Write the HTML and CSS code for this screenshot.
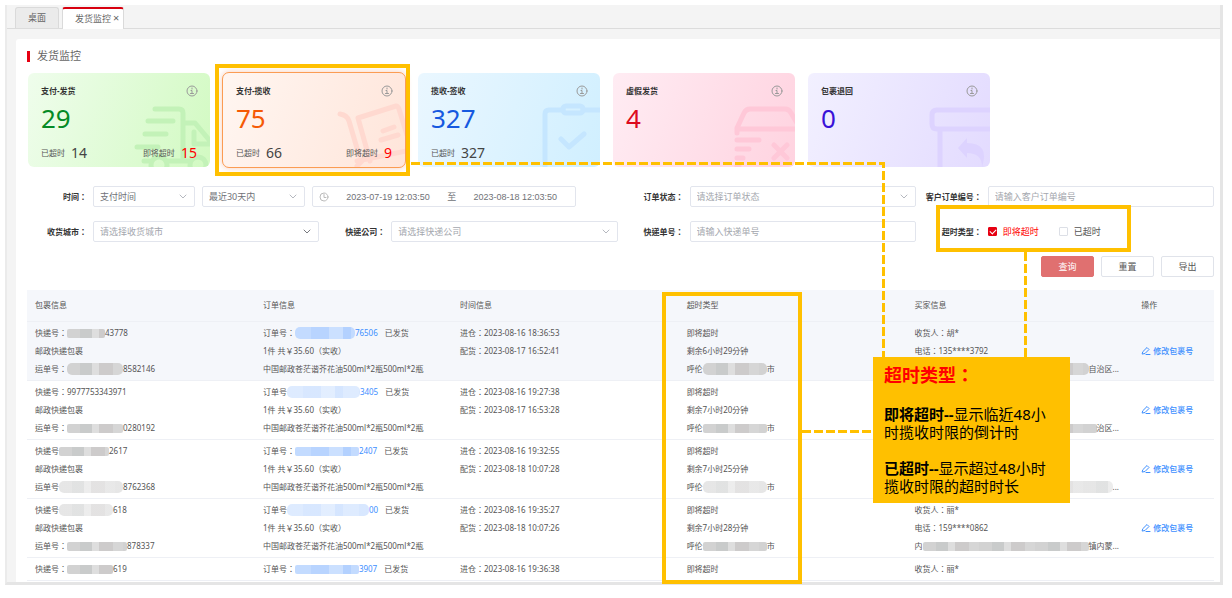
FILE: index.html
```html
<!DOCTYPE html>
<html lang="zh-CN">
<head>
<meta charset="utf-8">
<title>发货监控</title>
<link rel="stylesheet" href="styles.css">
</head>
<body>
<div class="frame">
  <nav class="tabs">
    <button class="tab" type="button">桌面</button>
    <button class="tab tab-active" type="button">发货监控<span class="tab-close">×</span></button>
  </nav>
  <main class="panel">
    <h1 class="page-title">发货监控</h1>

    <section class="cards">
      <article class="card card-green">
        <svg class="art" viewBox="0 0 182 94"><path d="M127 36H151Q155 36 155 40V88M120 48H145M117 61H138M109 74H130M116 88H122M138 88H162M155 50H167L182 68M166 59V71H182"/><circle cx="131" cy="92" r="8"/><circle cx="170" cy="92" r="8"/></svg>
        <header class="card-head"><h2>支付-发货</h2><svg class="info" viewBox="0 0 12 12"><circle cx="6" cy="6" r="5"/><path d="M6 3v1M5 5.500h1v3M4.500 8.500h3"/></svg></header>
        <strong class="card-num">29</strong>
        <footer class="card-foot"><span>已超时 <b>14</b></span><span>即将超时 <b class="hot">15</b></span></footer>
      </article>
      <article class="card card-orange">
        <svg class="art" viewBox="0 0 182 94"><path d="M117 41Q124 42 126 48L136 82M135 45L173 33Q175 33 176 36L184 62M135 45L147 88M160 58L171 54M158 67L175 62M134 88L183 78M134 93L140 87"/></svg>
        <header class="card-head"><h2>支付-揽收</h2><svg class="info" viewBox="0 0 12 12"><circle cx="6" cy="6" r="5"/><path d="M6 3v1M5 5.500h1v3M4.500 8.500h3"/></svg></header>
        <strong class="card-num">75</strong>
        <footer class="card-foot"><span>已超时 <b>66</b></span><span>即将超时 <b class="hot">9</b></span></footer>
      </article>
      <article class="card card-blue">
        <svg class="art" viewBox="0 0 182 94"><path d="M127 96V41Q127 37 131 37H145M165 37H184M143 66L151 74L166 61"/><rect x="145" y="33" width="20" height="7" rx="3"/></svg>
        <header class="card-head"><h2>揽收-签收</h2><svg class="info" viewBox="0 0 12 12"><circle cx="6" cy="6" r="5"/><path d="M6 3v1M5 5.500h1v3M4.500 8.500h3"/></svg></header>
        <strong class="card-num">327</strong>
        <footer class="card-foot"><span>已超时 <b>327</b></span></footer>
      </article>
      <article class="card card-pink">
        <svg class="art" viewBox="0 0 182 94"><path d="M124 60V55L131 40Q133 36 137 36H172Q176 36 178 40L184 50M124 56H184M124 67H146M124 76H136M124 85H130M124 93H126M161 72L174 85M174 72L161 85"/></svg>
        <header class="card-head"><h2>虚假发货</h2><svg class="info" viewBox="0 0 12 12"><circle cx="6" cy="6" r="5"/><path d="M6 3v1M5 5.500h1v3M4.500 8.500h3"/></svg></header>
        <strong class="card-num">4</strong>
      </article>
      <article class="card card-purple">
        <svg class="art" viewBox="0 0 182 94"><path d="M184 37H129Q124 37 124 42V51Q124 56 129 56H184M132 56V96"/><path class="solid" d="M150 75L159 65V70Q182 70 174 94Q174 80 159 80V85Z"/></svg>
        <header class="card-head"><h2>包裹退回</h2><svg class="info" viewBox="0 0 12 12"><circle cx="6" cy="6" r="5"/><path d="M6 3v1M5 5.500h1v3M4.500 8.500h3"/></svg></header>
        <strong class="card-num">0</strong>
      </article>
    </section>

    <form class="filters">
      <div class="field field-wide">
        <label class="label" for="time-kind">时间：</label>
        <div class="controls">
          <div class="select"><select id="time-kind"><option>支付时间</option></select><svg class="chevron" viewBox="0 0 8 6"><path d="M1 1L4 4L7 1"/></svg></div>
          <div class="select"><select aria-label="时间范围"><option>最近30天内</option></select><svg class="chevron" viewBox="0 0 8 6"><path d="M1 1L4 4L7 1"/></svg></div>
          <div class="range">
            <svg class="clock" viewBox="0 0 10 10"><circle cx="5" cy="5" r="4"/><path d="M5 2.500V5.500H7"/></svg>
            <input type="text" aria-label="开始时间" value="2023-07-19 12:03:50"><span>至</span><input type="text" aria-label="结束时间" value="2023-08-18 12:03:50">
          </div>
        </div>
      </div>
      <div class="field">
        <label class="label" for="status">订单状态：</label>
        <div class="select"><select id="status" class="empty"><option>请选择订单状态</option></select><svg class="chevron" viewBox="0 0 8 6"><path d="M1 1L4 4L7 1"/></svg></div>
      </div>
      <div class="field">
        <label class="label" for="client-no">客户订单编号：</label>
        <input class="text" id="client-no" type="text" placeholder="请输入客户订单编号">
      </div>
      <div class="field">
        <label class="label" for="city">收货城市：</label>
        <div class="select"><select id="city" class="empty"><option>请选择收货城市</option></select><svg class="chevron chevron-dark" viewBox="0 0 8 6"><path d="M1 1L4 4L7 1"/></svg></div>
      </div>
      <div class="field">
        <label class="label" for="company">快递公司：</label>
        <div class="select"><select id="company" class="empty"><option>请选择快递公司</option></select><svg class="chevron" viewBox="0 0 8 6"><path d="M1 1L4 4L7 1"/></svg></div>
      </div>
      <div class="field">
        <label class="label" for="express-no">快递单号：</label>
        <input class="text" id="express-no" type="text" placeholder="请输入快递单号">
      </div>
      <div class="field">
        <span class="label">超时类型：</span>
        <div class="checks">
          <label class="check check-on"><input type="checkbox" checked>即将超时</label>
          <label class="check"><input type="checkbox">已超时</label>
        </div>
      </div>
    </form>
    <div class="actions">
      <button class="btn btn-primary" type="button">查询</button>
      <button class="btn" type="button">重置</button>
      <button class="btn" type="button">导出</button>
    </div>

    <table class="grid">
      <colgroup><col class="c1"><col class="c2"><col class="c3"><col class="c4"><col class="c5"><col></colgroup>
      <thead><tr><th>包裹信息</th><th>订单信息</th><th>时间信息</th><th>超时类型</th><th>买家信息</th><th>操作</th></tr></thead>
      <tbody>
        <tr class="row-hover">
          <td><p>快递号：<i class="mask w38"></i>43778</p><p>邮政快递包裹</p><p>运单号：<i class="mask tall w56"></i>8582146</p></td>
          <td><p>订单号：<i class="mask blue tall w60"></i><a href="#">76506</a>已发货</p><p>1件 共￥35.60（实收）</p><p>中国邮政苍茫谐芥花油500ml*2瓶500ml*2瓶</p></td>
          <td><p>进仓：2023-08-16 18:36:53</p><p>配货：2023-08-17 16:52:41</p></td>
          <td><p>即将超时</p><p>剩余6小时29分钟</p><p>呼伦<i class="mask tall w64"></i>市</p></td>
          <td><p>收货人：胡*</p><p>电话：135****3792</p><p><i class="mask tall w174"></i>自治区...</p></td>
          <td><a class="edit" href="#"><svg viewBox="0 0 10 10"><path d="M2 5.500L6 1.500L8 3.500L4 7.500L1.500 8ZM5 8.500H9"/></svg>修改包裹号</a></td>
        </tr>
        <tr>
          <td><p>快递号：9977753343971</p><p>邮政快递包裹</p><p>运单号：<i class="mask w56"></i>0280192</p></td>
          <td><p>订单号<i class="mask blue pale tall w73"></i><a href="#">3405</a>已发货</p><p>1件 共￥35.60（实收）</p><p>中国邮政苍茫谐芥花油500ml*2瓶500ml*2瓶</p></td>
          <td><p>进仓：2023-08-16 19:27:38</p><p>配货：2023-08-17 16:53:28</p></td>
          <td><p>即将超时</p><p>剩余7小时20分钟</p><p>呼伦<i class="mask w64"></i>市</p></td>
          <td><p></p><p></p><p><i class="mask w182"></i>治区...</p></td>
          <td><a class="edit" href="#"><svg viewBox="0 0 10 10"><path d="M2 5.500L6 1.500L8 3.500L4 7.500L1.500 8ZM5 8.500H9"/></svg>修改包裹号</a></td>
        </tr>
        <tr>
          <td><p>快递号<i class="mask w50"></i>2617</p><p>邮政快递包裹</p><p>运单号<i class="mask pale tall w64"></i>8762368</p></td>
          <td><p>订单号：<i class="mask blue w64"></i><a href="#">2407</a>已发货</p><p>1件 共￥35.60（实收）</p><p>中国邮政苍茫谐芥花油500ml*2瓶500ml*2瓶</p></td>
          <td><p>进仓：2023-08-16 19:32:55</p><p>配货：2023-08-18 10:07:28</p></td>
          <td><p>即将超时</p><p>剩余7小时25分钟</p><p>呼伦<i class="mask pale tall w64"></i>市</p></td>
          <td><p></p><p></p><p><i class="mask pale tall w198"></i>...</p></td>
          <td><a class="edit" href="#"><svg viewBox="0 0 10 10"><path d="M2 5.500L6 1.500L8 3.500L4 7.500L1.500 8ZM5 8.500H9"/></svg>修改包裹号</a></td>
        </tr>
        <tr>
          <td><p>快递号<i class="mask pale tall w54"></i>618</p><p>邮政快递包裹</p><p>运单号：<i class="mask w60"></i>878337</p></td>
          <td><p>订单号<i class="mask blue pale tall w82"></i><a href="#">00</a>已发货</p><p>1件 共￥35.60（实收）</p><p>中国邮政苍茫谐芥花油500ml*2瓶500ml*2瓶</p></td>
          <td><p>进仓：2023-08-16 19:35:27</p><p>配货：2023-08-18 10:07:26</p></td>
          <td><p>即将超时</p><p>剩余7小时28分钟</p><p>呼伦<i class="mask w64"></i>市</p></td>
          <td><p>收货人：丽*</p><p>电话：159****0862</p><p>内<i class="mask w166"></i>镇内蒙...</p></td>
          <td><a class="edit" href="#"><svg viewBox="0 0 10 10"><path d="M2 5.500L6 1.500L8 3.500L4 7.500L1.500 8ZM5 8.500H9"/></svg>修改包裹号</a></td>
        </tr>
        <tr>
          <td><p>快递号：<i class="mask w46"></i>619</p></td>
          <td><p>订单号：<i class="mask blue w64"></i><a href="#">3907</a>已发货</p></td>
          <td><p>进仓：2023-08-16 19:36:38</p></td>
          <td><p>即将超时</p></td>
          <td><p>收货人：丽*</p></td>
          <td></td>
        </tr>
      </tbody>
    </table>
  </main>
</div>

<div class="notes">
  <svg class="links"><path d="M411 163.500H883.500V357M1025.500 252V357M802 431.500H873"/></svg>
  <div class="mark mark-card"></div>
  <div class="mark mark-check"></div>
  <div class="mark mark-column"></div>
  <aside class="callout">
    <h3>超时类型：</h3>
    <p><b>即将超时--</b>显示临近48小时揽收时限的倒计时</p>
    <p><b>已超时--</b>显示超过48小时揽收时限的超时时长</p>
  </aside>
</div>
</body>
</html>
```
FILE: styles.css
```css
* { box-sizing: border-box; }
body, h1, h2, h3, p { margin: 0; }
body {
  position: relative;
  min-height: 100vh;
  padding: 5px 9px 13px 5px;
  background: #fff;
  color: #555;
  font: 8px/18px "Noto Sans", "Noto Sans CJK SC", sans-serif;
}
button, input, select { font: inherit; color: inherit; margin: 0; }
a { color: #3d8fff; text-decoration: none; }
svg { fill: none; stroke: currentColor; stroke-linecap: round; stroke-linejoin: round; }

/* Centred full-width colons */
.label, .grid, .callout {
  font-family: "Noto Sans", "Noto Sans CJK TC", "Noto Sans CJK SC", sans-serif;
  font-feature-settings: "locl" 0;
}

.frame {
  display: flex;
  flex-direction: column;
  height: calc(100vh - 18px);
  overflow: hidden;
  background: #f4f4f4;
  border: solid #e5e5e5;
  border-width: 0 3px 3px 0;
  border-left: 2px solid #ebebeb;
}

.tabs {
  display: flex;
  align-items: flex-end;
  gap: 3px;
  height: 24px;
  flex: none;
  padding-left: 8px;
  border-bottom: 1px solid #dcdcdc;
}
.tab {
  height: 21px;
  padding: 0 12px;
  border: 1px solid #dadada;
  border-bottom: 0;
  border-radius: 3px 3px 0 0;
  background: #ebebeb;
  color: #666;
  font-size: 9px;
  line-height: 18px;
}
.tab-active {
  height: 22px;
  padding: 0 4px 0 12px;
  margin-bottom: -1px;
  border-top: 2px solid #d7000f;
  background: #fff;
  line-height: 20px;
}
.tab-close { margin-left: 2px; font-size: 11px; line-height: 1; }

.panel {
  flex: 1;
  min-height: 0;
  overflow: hidden;
  margin: 10px 0 0 9px;
  padding: 8px 6px 0 11px;
  background: #fff;
  border-radius: 3px 0 0 0;
}
.page-title {
  display: flex;
  align-items: center;
  gap: 7px;
  height: 18px;
  color: #666;
  font-size: 11px;
  font-weight: 400;
}
.page-title::before { content: ""; width: 3px; height: 11px; background: #e60012; }

.cards {
  display: grid;
  grid-template-columns: repeat(auto-fill, 182px);
  gap: 13px;
  padding: 8px 0 0 1px;
}
.card {
  position: relative;
  display: flex;
  flex-direction: column;
  min-height: 94px;
  padding: 10px 13px 4px;
  border-radius: 6px;
}
.card > * { position: relative; }
.card > .art { position: absolute; inset: 0; width: 100%; height: 94px; stroke-width: 5; border-radius: 6px; }
.art .solid { fill: currentColor; stroke: none; }
.card-head { display: flex; justify-content: space-between; align-items: center; height: 16px; color: #333; }
.card-head h2 { font-size: 8px; font-weight: 700; }
.info { width: 12px; height: 12px; margin-right: -1px; stroke: #999; stroke-width: 1; }
.card-num { margin-top: 3px; font-size: 26px; line-height: 32px; font-weight: 400; }
.card-foot { display: flex; justify-content: space-between; margin-top: 9px; line-height: 20px; }
.card-foot b { margin-left: 4px; color: #444; font-size: 14px; font-weight: 400; vertical-align: -2px; }
.card-foot .hot { color: #f00; }
.card-green { background: linear-gradient(110deg, #effdec, #d2fac2); }
.card-green .art { color: #c3f2b8; }
.card-green .card-num { color: #058a26; }
.card-orange { background: linear-gradient(110deg, #fff6f1, #ffe5da); outline: 1px solid #fb9c53; box-shadow: 0 0 6px 1px #f7cdb8; }
.card-orange .art { color: #ffd9d0; }
.card-orange .card-num { color: #f55a05; }
.card-blue { background: linear-gradient(110deg, #eaf7ff, #d0efff); }
.card-blue .art { color: #c5e6ff; }
.card-blue .card-num { color: #1659e0; }
.card-pink { background: linear-gradient(110deg, #ffecf3, #ffd3e0); }
.card-pink .art { color: #ffc8d8; }
.card-pink .card-num { color: #dc0a1e; }
.card-purple { background: linear-gradient(110deg, #f2f0ff, #e3dbff); }
.card-purple .art { color: #ddd3ff; }
.card-purple .card-num { color: #3911d8; }

.filters {
  display: grid;
  grid-template-columns: repeat(4, 1fr);
  row-gap: 14px;
  margin: 19px 0 0 -6px;
}
.field { display: flex; align-items: center; height: 21px; }
.field-wide { grid-column: span 2; }
.label { flex: none; width: 72px; padding-right: 6px; color: #333; font-weight: 700; text-align: right; white-space: nowrap; }
.controls { flex: 1; display: grid; grid-template-columns: 102fr 103fr 264fr; gap: 7px; padding-right: 42px; }
.select { position: relative; flex: 1; height: 21px; }
.range { display: flex; align-items: center; min-width: 0; padding-left: 6px; }
.select select, .text, .range {
  height: 21px;
  border: 1px solid #e2e5ed;
  border-radius: 2px;
  background: #fff;
  color: #707277;
  font-size: 9px;
}
.select select { appearance: none; width: 100%; padding: 0 6px; }
.select .empty, .text::placeholder { color: #a4a7ae; opacity: 1; }
.text { flex: 1; min-width: 0; padding: 0 6px; }
.chevron { position: absolute; right: 8px; top: 8px; width: 8px; height: 6px; stroke: #b5b8bf; pointer-events: none; }
.chevron-dark { stroke: #77797e; }
.clock { flex: none; width: 10px; height: 10px; stroke: #bbb; }
.range input { flex: 1; min-width: 0; padding: 0; border: 0; background: none; font-family: "Liberation Sans", sans-serif; text-align: center; }

.checks { display: flex; gap: 20px; font-size: 9px; }
.check { display: flex; align-items: center; gap: 6px; }
.check-on { color: #f00; }
.check input { appearance: none; position: relative; width: 9px; height: 9px; border: 1px solid #dcdfe6; border-radius: 1px; }
.check input:checked { background: #e60012; border-color: #e60012; }
.check input:checked::after { content: ""; position: absolute; left: 2px; top: 0; width: 3px; height: 5px; border: solid #fff; border-width: 0 1px 1px 0; transform: rotate(45deg); }

.actions { display: flex; justify-content: flex-end; gap: 7px; padding: 14px 0 13px; }
.btn { width: 53px; height: 21px; padding: 0; border: 1px solid #e0e3ea; border-radius: 2px; background: #fff; font-size: 9px; }
.btn-primary { background: #e07070; border-color: #e07070; color: #fff; }

.grid { width: 100%; table-layout: fixed; border-collapse: collapse; }
.c1, .c4 { width: 19.2%; }
.c2 { width: 16.6%; }
.c3, .c5 { width: 19.1%; }
.grid th, .grid td { padding: 2px 0 2px 8px; border-bottom: 1px solid #eef0f5; text-align: left; vertical-align: top; white-space: nowrap; }
.grid th { height: 31px; background: #f5f7fb; font-weight: 400; vertical-align: middle; }
.grid td:last-child { vertical-align: middle; }
.grid p { height: 18px; }
.row-hover { background: #f5f7fb; }
.grid p a { margin-right: 7px; }
.edit { display: flex; align-items: center; gap: 2px; font-weight: 500; }
.edit svg { width: 10px; height: 10px; }

.mask {
  display: inline-block;
  height: 9px;
  border-radius: 2px;
  vertical-align: middle;
  background: repeating-linear-gradient(90deg, #d2d2d2 0 13px, #c9cbcb 13px 25px, #dedede 25px 32px, #cdcbcb 32px 46px, #d6d6d6 46px 56px);
}
.mask.blue { background: repeating-linear-gradient(90deg, #c3dbff 0 16px, #b8d4ff 16px 34px, #cbe0ff 34px 48px, #b3d1ff 48px 56px); }
.mask.tall { height: 12px; border-radius: 5px; }
.mask.pale { opacity: .55; }
.w38 { width: 38px; }
.w46 { width: 46px; }
.w50 { width: 50px; }
.w54 { width: 54px; }
.w56 { width: 56px; }
.w60 { width: 60px; }
.w64 { width: 64px; }
.w73 { width: 73px; }
.w82 { width: 82px; }
.w166 { width: 166px; }
.w174 { width: 174px; }
.w182 { width: 182px; }
.w198 { width: 198px; }

.notes { position: absolute; inset: 0; pointer-events: none; }
.links { position: absolute; width: 100%; height: 100%; stroke: #ffc000; stroke-width: 3; stroke-dasharray: 9 3; stroke-linecap: butt; stroke-linejoin: miter; }
.mark { position: absolute; border: 4px solid #ffc000; }
.mark-card { left: 215px; top: 64px; width: 195px; height: 112px; }
.mark-check { left: 936px; top: 205px; width: 195px; height: 47px; }
.mark-column { left: 662px; top: 292px; width: 140px; height: 292px; }
.callout {
  position: absolute;
  left: 873px;
  top: 357px;
  width: 197px;
  padding: 6px 11px 8px;
  background: #ffc000;
  color: #000;
  font-size: 15px;
  line-height: 18px;
}
.callout h3 { color: #f00; font-size: 18px; line-height: 24px; }
.callout p { margin-top: 18px; }
```
